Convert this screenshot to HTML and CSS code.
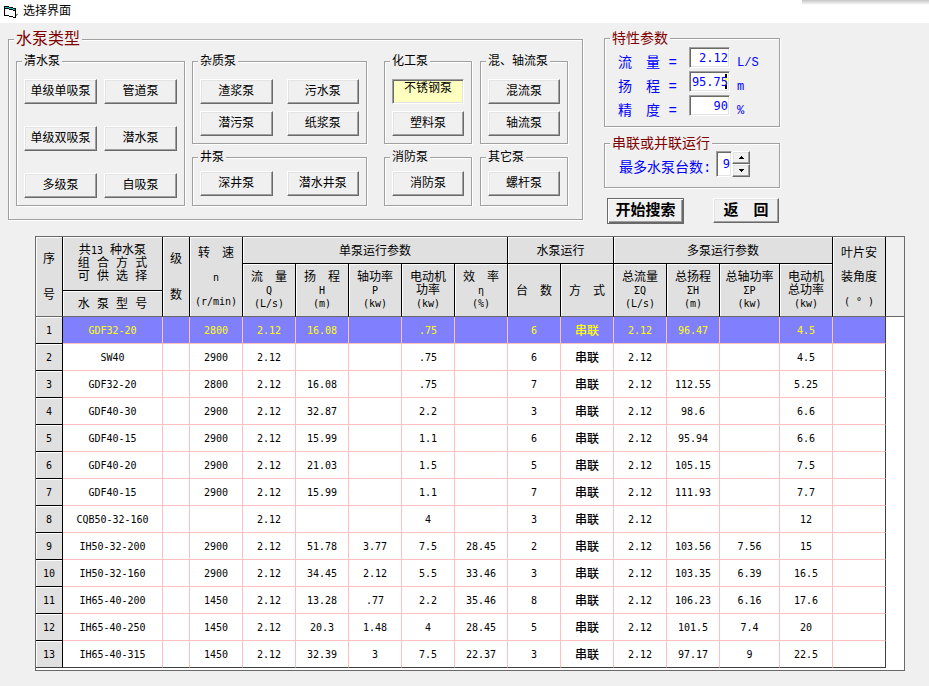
FILE: index.html
```
<!DOCTYPE html>
<html lang="zh-CN">
<head>
<meta charset="utf-8">
<title>选择界面</title>
<link rel="stylesheet" href="styles.css">
</head>
<body>
<header class="titlebar">
<svg class="app-icon" width="14" height="12" viewBox="0 0 14 12" shape-rendering="crispEdges" aria-hidden="true">
<path d="M0 0h5v1h4v1h3v10h-3v-1h-4v-1h-5z" fill="#000"/>
<path d="M1 3h4v1h4v1h2v6h-2v-1h-4v-1h-4z" fill="#fff"/>
<path d="M1 1h4v1h4v1h2v1h-2v-1h-4v-1h-4z" fill="#0cc"/>
<path d="M12 8h2v1h-1v1h-1z" fill="#888"/>
</svg>
<h1>选择界面</h1>
</header>
<main>
<section class="top">
<fieldset class="frame types">
<legend class="big">水泵类型</legend>
<div class="groups">
<fieldset class="frame"><legend>清水泵</legend>
<div class="btns two tall">
<button>单级单吸泵</button><button>管道泵</button>
<button>单级双吸泵</button><button>潜水泵</button>
<button>多级泵</button><button>自吸泵</button>
</div></fieldset>
<div class="stack">
<fieldset class="frame"><legend>杂质泵</legend>
<div class="btns two spaced"><button>渣浆泵</button><button>污水泵</button><button>潜污泵</button><button>纸浆泵</button></div></fieldset>
<fieldset class="frame low"><legend>井泵</legend>
<div class="btns two spaced"><button>深井泵</button><button>潜水井泵</button></div></fieldset>
</div>
<div class="stack narrow">
<div class="stack">
<fieldset class="frame"><legend>化工泵</legend>
<div class="btns"><button class="pressed" aria-pressed="true">不锈钢泵</button><button>塑料泵</button></div></fieldset>
<fieldset class="frame low"><legend>消防泵</legend>
<div class="btns"><button>消防泵</button></div></fieldset>
</div>
<div class="stack">
<fieldset class="frame"><legend>混、轴流泵</legend>
<div class="btns"><button>混流泵</button><button>轴流泵</button></div></fieldset>
<fieldset class="frame low"><legend>其它泵</legend>
<div class="btns"><button>螺杆泵</button></div></fieldset>
</div>
</div>
</div>
</fieldset>
<div class="side">
<fieldset class="frame params">
<legend class="mid">特性参数</legend>
<div class="field"><label for="flow">流　量 =</label><input id="flow" value="2.12"><span>L/S</span></div>
<div class="field"><label for="head">扬　程 =</label><input id="head" class="editing" value="95.75"><span>m</span></div>
<div class="field"><label for="prec">精　度 =</label><input id="prec" value="90"><span>%</span></div>
</fieldset>
<fieldset class="frame run">
<legend class="mid">串联或并联运行</legend>
<div class="count"><label for="max">最多水泵台数:</label><input id="max" value="9">
<div class="spin"><button aria-label="增加"><svg width="5" height="3" viewBox="0 0 5 3" shape-rendering="crispEdges"><path d="M2 0h1v1h1v1h1v1h-5v-1h1v-1h1z"/></svg></button><button aria-label="减少"><svg width="5" height="3" viewBox="0 0 5 3" shape-rendering="crispEdges"><path d="M0 0h5v1h-1v1h-1v1h-1v-1h-1v-1h-1z"/></svg></button></div></div>
</fieldset>
<div class="actions"><button class="default">开始搜索</button><button class="back">返　回</button></div>
</div>
</section>
<div class="grid-box">
<table>
<colgroup><col class="c-seq"><col class="c-model"><col class="c-seq"><col span="10" class="c-val"><col class="c-power"><col class="c-val"><col class="c-val"><col></colgroup>
<thead>
<tr><th rowspan="3" class="seq-head">序<br>号</th><th rowspan="2" class="tight">共<i>13</i> 种水泵<br>组 合 方 式<br>可 供 选 择</th><th rowspan="3" class="seq-head">级<br>数</th><th rowspan="3" class="loose">转　速<br><i>n</i><br><i>(r/min)</i></th><th colspan="5">单泵运行参数</th><th colspan="2">水泵运行</th><th colspan="4">多泵运行参数</th><th rowspan="3" class="loose last">叶片安<br>装角度<br><i>( ° )</i></th><td rowspan="3" class="filler"></td></tr>
<tr><th rowspan="2" class="tight">流　量<br><i>Q</i><br><i>(L/s)</i></th><th rowspan="2" class="tight">扬　程<br><i>H</i><br><i>(m)</i></th><th rowspan="2" class="tight">轴功率<br><i>P</i><br><i>(kw)</i></th><th rowspan="2" class="tight">电动机<br>功率<br><i>(kw)</i></th><th rowspan="2" class="tight">效　率<br><i>η</i><br><i>(%)</i></th><th rowspan="2">台　数</th><th rowspan="2">方　式</th><th rowspan="2" class="tight">总流量<br><i>ΣQ</i><br><i>(L/s)</i></th><th rowspan="2" class="tight">总扬程<br><i>ΣH</i><br><i>(m)</i></th><th rowspan="2" class="tight">总轴功率<br><i>ΣP</i><br><i>(kw)</i></th><th rowspan="2" class="tight">电动机<br>总功率<br><i>(kw)</i></th></tr>
<tr><th>水 泵 型 号</th></tr>
</thead>
<tbody id="rows"></tbody>
</table>
</div>
</main>
<script src="rows.js"></script>
</body>
</html>
```
FILE: styles.css
```
* { box-sizing: border-box; }
body {
  margin: 0;
  background: #f0f0f0;
  color: #000;
  font: 12px/16px "Liberation Mono", "Noto Sans CJK SC", monospace;
}
button, input { font: inherit; color: inherit; margin: 0; border-radius: 0; }

.titlebar {
  display: flex;
  align-items: center;
  gap: 5px;
  height: 23px;
  padding-left: 4px;
  background: linear-gradient(#c4c4c4, #d0d0d0 1px, #fff) top right / 127px 5px no-repeat #fff;
}
h1 { margin: 0; font-size: 12px; font-weight: 400; line-height: 18px; padding-top: 1px; }

main { padding: 7px 0 14px; }
.top {
  display: grid;
  grid-template-columns: 575fr 176fr 128fr;
  column-gap: 21px;
  align-items: start;
  padding-left: 8px;
}

.frame {
  min-width: 0;
  margin: 0;
  padding: 10px 5px 7px;
  border: 1px solid #a0a0a0;
  box-shadow: 1px 1px 0 #fff, inset 1px 1px 0 #fff;
}
.frame.low { padding: 6px 5px 9px; }
legend { height: 16px; padding: 0 2px; background: #f0f0f0; line-height: 18px; }
legend.big { height: 18px; color: #800000; font-size: 16px; line-height: 20px; }
legend.mid { color: #800000; font-size: 14px; }

.frame.types { padding: 5px 12px 13px 5px; }
.groups { display: grid; grid-template-columns: 169fr 175fr 194fr; column-gap: 7px; padding: 0 2px; }
.stack { display: flex; flex-direction: column; gap: 5px; min-width: 0; }
.stack.narrow { display: grid; grid-template-columns: 1fr 1fr; gap: 8px; padding-left: 10px; }
.btns { display: grid; gap: 7px; padding: 0 2px; }
.btns.two { grid-template-columns: 1fr 1fr; column-gap: 7px; }
.btns.spaced { column-gap: 14px; }
.btns.tall { row-gap: 22px; }

button {
  height: 25px;
  padding: 0;
  background: #f0f0f0;
  border: 1px solid;
  border-color: #fff #696969 #696969 #fff;
  box-shadow: inset -1px -1px 0 #a0a0a0, inset 1px 1px 0 #e3e3e3;
  white-space: nowrap;
}
button.pressed {
  padding-bottom: 6px;
  background: #ffffc0;
  border-color: #a0a0a0 #fff #fff #a0a0a0;
  box-shadow: inset 1px 1px 0 #696969, inset -1px -1px 0 #e3e3e3;
}

input {
  min-width: 0;
  padding: 0 1px;
  background: #fff;
  border: 1px solid;
  border-color: #a0a0a0 #fff #fff #a0a0a0;
  box-shadow: inset 1px 1px 0 #696969, inset -1px -1px 0 #e3e3e3;
  color: #00f;
  font-family: "DejaVu Sans Mono", monospace;
  text-align: right;
}
input.editing {
  background: linear-gradient(#000 4px, #ff0 4px, #ff0 11px, #000 11px) right 2px center / 2px 15px no-repeat #fff;
}

.side { color: #00f; font-size: 14px; }
.frame.params { padding: 1px 5px 7px; }
.field { display: grid; grid-template-columns: 71px 41px 1fr; height: 24px; padding-left: 8px; }
.field label, .field span { padding-top: 8px; white-space: pre; }
.field span { padding-left: 7px; font-size: 12px; }
.field input { height: 21px; font-size: 12px; }
.frame.run { margin-top: 8px; padding: 0 5px 10px; }
.count { display: flex; align-items: flex-start; padding-left: 9px; }
.count label { flex: 0 0 97px; padding-top: 9px; white-space: nowrap; }
.count input { width: 16px; height: 26px; font-size: 12px; }
.spin { display: flex; flex-direction: column; width: 18px; }
.spin button { display: flex; align-items: center; justify-content: center; height: 13px; }

.actions { display: flex; justify-content: space-between; padding: 10px 1px 0 3px; color: #000; font-size: 15px; font-weight: 700; }
.actions button { padding-top: 2px; }
.actions .default { width: 77px; height: 26px; border-color: #696969; box-shadow: inset 1px 1px 0 #fff, inset -1px -1px 0 #696969, inset -2px -2px 0 #a0a0a0; }
.actions .back { width: 66px; }

.grid-box {
  margin: 12px 24px 0 35px;
  padding-bottom: 2px;
  background: #fff;
  border: 1px solid #696969;
}
table { width: 100%; border-collapse: separate; border-spacing: 0; table-layout: fixed; }
.c-seq { width: 27px; }
.c-model { width: 100px; }
.c-val { width: 53px; }
.c-power { width: 60px; }
tr { height: 27px; }
thead tr:last-child { height: 26px; }
th, td { padding: 0; text-align: center; font-weight: 400; line-height: 14px; white-space: nowrap; }
th {
  background: #e0e0e0;
  border: solid #000;
  border-width: 0 1px 1px 0;
  box-shadow: inset 1px 1px 0 #fff;
}
thead th { padding-top: 3px; }
thead th[rowspan="3"], thead tr:nth-child(2) th[rowspan="2"], thead tr:nth-child(3) th, .filler { border-bottom: 1px solid #696969; }
.filler { background: #f0f0f0; }
thead i { font: 10px/12px "DejaVu Sans Mono", monospace; }
thead .tight { padding-top: 2px; line-height: 13px; }
.seq-head { line-height: 36px; }
.loose { line-height: 24px; }

tbody td { border: solid #ffc0c0; border-width: 0 1px 1px 0; font-family: "DejaVu Sans Mono", "Noto Sans CJK SC", monospace; font-size: 10px; }
tbody th, tbody td { padding-top: 1px; }
tbody th { font-family: "DejaVu Sans Mono", monospace; font-size: 10px; }
tbody td.mode { padding: 0; font-family: "Noto Sans CJK SC", sans-serif; font-size: 12px; font-weight: 500; }
tbody td.end { border-right-color: #404040; }
tbody tr:last-child td, tbody tr:last-child th { border-bottom-color: #404040; }
tbody td.blank, tbody tr:last-child td.blank { border: 0; }
tbody .selected td:not(.blank) { background: #8080ff; color: #ff0; }
```
FILE: rows.js
```
const rows = [
  ["GDF32-20", "", "2800", "2.12", "16.08", "", ".75", "", "6", "串联", "2.12", "96.47", "", "4.5", ""],
  ["SW40", "", "2900", "2.12", "", "", ".75", "", "6", "串联", "2.12", "", "", "4.5", ""],
  ["GDF32-20", "", "2800", "2.12", "16.08", "", ".75", "", "7", "串联", "2.12", "112.55", "", "5.25", ""],
  ["GDF40-30", "", "2900", "2.12", "32.87", "", "2.2", "", "3", "串联", "2.12", "98.6", "", "6.6", ""],
  ["GDF40-15", "", "2900", "2.12", "15.99", "", "1.1", "", "6", "串联", "2.12", "95.94", "", "6.6", ""],
  ["GDF40-20", "", "2900", "2.12", "21.03", "", "1.5", "", "5", "串联", "2.12", "105.15", "", "7.5", ""],
  ["GDF40-15", "", "2900", "2.12", "15.99", "", "1.1", "", "7", "串联", "2.12", "111.93", "", "7.7", ""],
  ["CQB50-32-160", "", "", "2.12", "", "", "4", "", "3", "串联", "2.12", "", "", "12", ""],
  ["IH50-32-200", "", "2900", "2.12", "51.78", "3.77", "7.5", "28.45", "2", "串联", "2.12", "103.56", "7.56", "15", ""],
  ["IH50-32-160", "", "2900", "2.12", "34.45", "2.12", "5.5", "33.46", "3", "串联", "2.12", "103.35", "6.39", "16.5", ""],
  ["IH65-40-200", "", "1450", "2.12", "13.28", ".77", "2.2", "35.46", "8", "串联", "2.12", "106.23", "6.16", "17.6", ""],
  ["IH65-40-250", "", "1450", "2.12", "20.3", "1.48", "4", "28.45", "5", "串联", "2.12", "101.5", "7.4", "20", ""],
  ["IH65-40-315", "", "1450", "2.12", "32.39", "3", "7.5", "22.37", "3", "串联", "2.12", "97.17", "9", "22.5", ""]
];
const body = document.getElementById("rows");
rows.forEach((row, r) => {
  const tr = body.insertRow();
  if (r === 0) tr.className = "selected";
  const th = document.createElement("th");
  th.scope = "row";
  th.textContent = r + 1;
  tr.append(th);
  row.forEach((text, c) => {
    const td = tr.insertCell();
    td.textContent = text;
    if (c === 9) td.className = "mode";
    if (c === 14) td.className = "end";
  });
  tr.insertCell().className = "blank";
});
```
